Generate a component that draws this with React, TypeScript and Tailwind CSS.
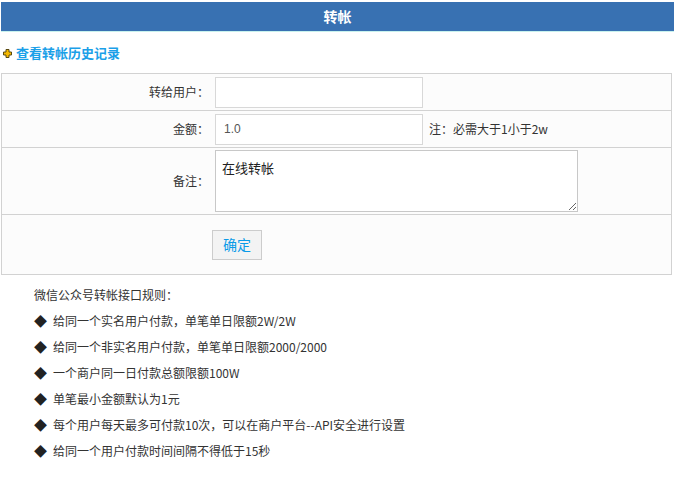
const font = { fontFamily: '"SimSun", "Noto Sans CJK SC", "DejaVu Sans", sans-serif' };

const rules = [
  '给同一个实名用户付款，单笔单日限额2W/2W',
  '给同一个非实名用户付款，单笔单日限额2000/2000',
  '一个商户同一日付款总额限额100W',
  '单笔最小金额默认为1元',
  '每个用户每天最多可付款10次，可以在商户平台--API安全进行设置',
  '给同一个用户付款时间间隔不得低于15秒',
];

function PlusIcon() {
  return (
    <svg width="9" height="9" viewBox="0 0 9 9" className="shrink-0">
      <path d="M3 0.5h3v2.5h2.5v3h-2.5v2.5h-3v-2.5h-2.5v-3h2.5z" fill="#f5b800" stroke="#5a4a10" strokeWidth="1" />
    </svg>
  );
}

export default function App() {
  return (
    <div className="h-[485px] w-[674px] bg-white pt-[2px] text-[12px] text-[#333]" style={font}>
      <div className="ml-px flex h-[30px] items-center justify-center border-b border-[#c8f2ee] bg-[#3871b2] text-[14px] font-bold text-white">
        转帐
      </div>

      <div className="flex h-[41px] items-center gap-[4px] pl-[3px] pt-[1px]">
        <PlusIcon />
        <a className="text-[13px] font-bold text-[#1ba0e8]">查看转帐历史记录</a>
      </div>

      <div className="ml-px mr-[2px] border border-[#d2d2d2] bg-[#fcfcfc]">
        <div className="flex h-[37px] items-center border-b border-[#d2d2d2]">
          <div className="w-[213px] pr-[6px] text-right">转给用户：</div>
          <input className="h-[31px] w-[208px] border border-[#d8d8d8] bg-white px-[6px] outline-none" />
        </div>
        <div className="flex h-[37px] items-center border-b border-[#d2d2d2]">
          <div className="w-[213px] pr-[6px] text-right">金额：</div>
          <input
            defaultValue="1.0"
            className="h-[31px] w-[208px] border border-[#d8d8d8] bg-white px-[8px] text-[12px] text-[#555] outline-none"
            style={{ fontFamily: '"Liberation Sans", Arial, sans-serif' }}
          />
          <span className="ml-[6px]">注：必需大于1小于2w</span>
        </div>
        <div className="flex h-[67px] items-center border-b border-[#d2d2d2]">
          <div className="w-[213px] pr-[6px] text-right">备注：</div>
          <textarea
            defaultValue="在线转帐"
            className="h-[62px] w-[363px] border border-[#c8c8c8] bg-white px-[6px] py-[7px] text-[13px] text-[#222] outline-none"
          />
        </div>
        <div className="flex h-[59px] items-center pl-[210px]">
          <button className="h-[30px] w-[50px] border border-[#cccccc] bg-[#f3f3f3] text-[14px] text-[#0a9be8]">确定</button>
        </div>
      </div>

      <div className="pl-[34px] pt-[12px]">
        <p className="leading-[16px]">微信公众号转帐接口规则：</p>
        <ul className="mt-[10px] flex flex-col gap-[10px]">
          {rules.map((r) => (
            <li key={r} className="flex items-center gap-[6px] leading-[16px]">
              <span className="text-[13px] leading-[16px] text-[#222]">◆</span>
              <span>{r}</span>
            </li>
          ))}
        </ul>
      </div>
    </div>
  );
}
